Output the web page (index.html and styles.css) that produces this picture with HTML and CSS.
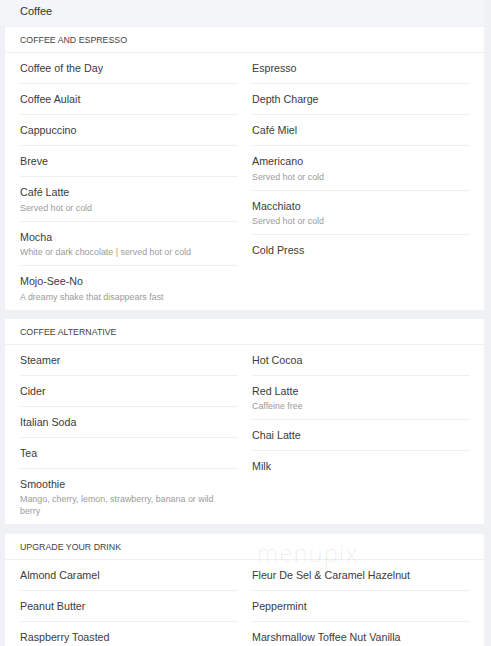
FILE: index.html
```html
<!DOCTYPE html>
<html lang="en">
<head>
<meta charset="utf-8">
<title>Coffee</title>
<link rel="stylesheet" href="styles.css">
</head>
<body>
<div class="page">
  <header class="top">Coffee</header>
  <main class="menu">
    <section class="card">
      <h2 class="card-head">COFFEE AND ESPRESSO</h2>
      <div class="cols">
        <ul class="col">
          <li class="item"><div class="name">Coffee of the Day</div></li>
          <li class="item"><div class="name">Coffee Aulait</div></li>
          <li class="item"><div class="name">Cappuccino</div></li>
          <li class="item"><div class="name">Breve</div></li>
          <li class="item"><div class="name">Café Latte</div><div class="sub">Served hot or cold</div></li>
          <li class="item"><div class="name">Mocha</div><div class="sub">White or dark chocolate | served hot or cold</div></li>
          <li class="item"><div class="name">Mojo-See-No</div><div class="sub">A dreamy shake that disappears fast</div></li>
        </ul>
        <ul class="col">
          <li class="item"><div class="name">Espresso</div></li>
          <li class="item"><div class="name">Depth Charge</div></li>
          <li class="item"><div class="name">Café Miel</div></li>
          <li class="item"><div class="name">Americano</div><div class="sub">Served hot or cold</div></li>
          <li class="item"><div class="name">Macchiato</div><div class="sub">Served hot or cold</div></li>
          <li class="item"><div class="name">Cold Press</div></li>
        </ul>
      </div>
    </section>
    <section class="card">
      <h2 class="card-head">COFFEE ALTERNATIVE</h2>
      <div class="cols">
        <ul class="col">
          <li class="item"><div class="name">Steamer</div></li>
          <li class="item"><div class="name">Cider</div></li>
          <li class="item"><div class="name">Italian Soda</div></li>
          <li class="item"><div class="name">Tea</div></li>
          <li class="item"><div class="name">Smoothie</div><div class="sub">Mango, cherry, lemon, strawberry, banana or wild berry</div></li>
        </ul>
        <ul class="col">
          <li class="item"><div class="name">Hot Cocoa</div></li>
          <li class="item"><div class="name">Red Latte</div><div class="sub">Caffeine free</div></li>
          <li class="item"><div class="name">Chai Latte</div></li>
          <li class="item"><div class="name">Milk</div></li>
        </ul>
      </div>
    </section>
    <section class="card">
      <h2 class="card-head">UPGRADE YOUR DRINK</h2>
      <div class="cols">
        <ul class="col">
          <li class="item"><div class="name">Almond Caramel</div></li>
          <li class="item"><div class="name">Peanut Butter</div></li>
          <li class="item"><div class="name">Raspberry Toasted</div></li>
        </ul>
        <ul class="col">
          <li class="item"><div class="name">Fleur De Sel &amp; Caramel Hazelnut</div></li>
          <li class="item"><div class="name">Peppermint</div></li>
          <li class="item"><div class="name">Marshmallow Toffee Nut Vanilla</div></li>
        </ul>
      </div>
    </section>
  </main>
  <div class="watermark">menupix</div>
</div>
</body>
</html>
```

FILE: styles.css
```css
html, body {
  margin: 0;
  padding: 0;
}
body {
  background: #f0f1f5;
  font-family: "Liberation Sans", Arial, sans-serif;
  color: #3b3b3b;
  overflow: hidden;
}
.page {
  position: relative;
  width: 491px;
}
.top {
  height: 26px;
  line-height: 22px;
  padding-left: 20px;
  font-size: 11px;
  color: #333;
  background: #f4f5f8;
  margin-right: 7px;
}
.menu {
  display: flex;
  flex-direction: column;
  gap: 9px;
  padding: 1px 7px 0 5px;
}
.card {
  background: #fff;
}
.card:last-child {
  margin-top: 1px;
}
.card-head {
  margin: 0;
  height: 25px;
  line-height: 26px;
  padding: 0 15px;
  font-size: 8.8px;
  font-weight: normal;
  color: #444;
  border-bottom: 1px solid #efefef;
}
.cols {
  display: grid;
  grid-template-columns: 1fr 1fr;
  column-gap: 14px;
  padding: 0 14px 0 15px;
}
.col {
  list-style: none;
  margin: 0;
  padding: 0;
}
.item {
  padding: 8px 0 7px;
  border-bottom: 1px solid #efefef;
}
.item:last-child {
  border-bottom: none;
}
.name {
  font-size: 10.7px;
  line-height: 15px;
  color: #3b3b3b;
}
.sub {
  margin-top: 1.5px;
  max-width: 205px;
  font-size: 8.9px;
  line-height: 12px;
  color: #9b9b9b;
}
.watermark {
  position: absolute;
  left: 257px;
  top: 543px;
  font-size: 24px;
  line-height: 20px;
  letter-spacing: 1px;
  color: rgba(0, 0, 0, 0.08);
  font-weight: 300;
  font-family: "Open Sans", sans-serif;
  pointer-events: none;
}
```
